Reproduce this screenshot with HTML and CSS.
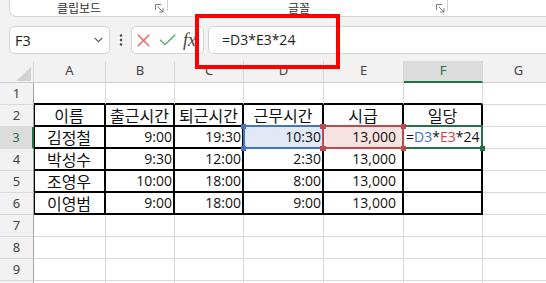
FILE: index.html
```html
<!DOCTYPE html>
<html lang="ko">
<head>
<meta charset="utf-8">
<title>Excel</title>
<link rel="stylesheet" href="styles.css">
</head>
<body>
<div class="app">
  <div class="ribbon">
    <div class="group clip">
      <span class="glabel">클립보드</span>
      <svg class="launcher" width="9" height="9" viewBox="0 0 9 9"><path d="M0.5 6V0.5H6" fill="none" stroke="#7a7a7a" stroke-width="1"/><path d="M2.5 2.5L8 8M8 4.2V8H4.2" fill="none" stroke="#7a7a7a" stroke-width="1"/></svg>
    </div>
    <div class="sep"></div>
    <div class="group fontg">
      <span class="glabel">글꼴</span>
      <svg class="launcher" width="9" height="9" viewBox="0 0 9 9"><path d="M0.5 6V0.5H6" fill="none" stroke="#7a7a7a" stroke-width="1"/><path d="M2.5 2.5L8 8M8 4.2V8H4.2" fill="none" stroke="#7a7a7a" stroke-width="1"/></svg>
    </div>
    <div class="sep"></div>
  </div>

  <div class="fbar">
    <div class="namebox">
      <span class="nbtext">F3</span>
      <svg class="chev" width="9" height="6" viewBox="0 0 9 6"><path d="M0.6 0.8L4.5 4.7L8.4 0.8" fill="none" stroke="#555" stroke-width="1.1"/></svg>
    </div>
    <div class="dots">
      <svg width="4" height="12" viewBox="0 0 4 12"><circle cx="2" cy="1.5" r="1.2" fill="#444"/><circle cx="2" cy="6" r="1.2" fill="#444"/><circle cx="2" cy="10.5" r="1.2" fill="#444"/></svg>
    </div>
    <div class="fbtns">
      <svg class="xicon" width="13" height="13" viewBox="0 0 13 13"><path d="M0.8 0.8L12.2 12.2M12.2 0.8L0.8 12.2" stroke="#e35b5b" stroke-width="1.3" fill="none"/></svg>
      <svg class="okicon" width="17" height="12" viewBox="0 0 17 12"><path d="M0.8 5.6L6 10.7L16.2 0.8" fill="none" stroke="#4aa656" stroke-width="1.3"/></svg>
      <span class="fx">fx</span>
    </div>
    <div class="finput">=D3*E3*24</div>
  </div>

  <div class="sheet">
    <div class="ch corner"><svg width="15" height="14" viewBox="0 0 15 14"><path d="M15 0V14H0Z" fill="#d3d3d3"/></svg></div>
    <div class="ch">A</div>
    <div class="ch">B</div>
    <div class="ch">C</div>
    <div class="ch">D</div>
    <div class="ch">E</div>
    <div class="ch sel">F</div>
    <div class="ch">G</div>

    <div class="rh">1</div>
    <div class="c tt"></div>
    <div class="c tt"></div>
    <div class="c tt"></div>
    <div class="c tt"></div>
    <div class="c tt"></div>
    <div class="c tt"></div>
    <div class="c"></div>

    <div class="rh">2</div>
    <div class="c t ta ctr">이름</div>
    <div class="c t ctr">출근시간</div>
    <div class="c t ctr">퇴근시간</div>
    <div class="c t ctr">근무시간</div>
    <div class="c t ctr">시급</div>
    <div class="c t ctr">일당</div>
    <div class="c"></div>

    <div class="rh sel">3</div>
    <div class="c t ta ctr">김정철</div>
    <div class="c t num">9:00</div>
    <div class="c t num">19:30</div>
    <div class="c t num hl d3">10:30<span class="ref blue"><i class="h tl"></i><i class="h bl"></i><i class="h tr"></i><i class="h br"></i></span></div>
    <div class="c t num pe hl e3">13,000<span class="ref red"><i class="h tl"></i><i class="h bl"></i><i class="h tr"></i><i class="h br"></i></span></div>
    <div class="c t hl fcell">=<span class="cb">D3</span>*<span class="cr">E3</span>*24<span class="ref green"><i class="h fill"></i></span></div>
    <div class="c"></div>

    <div class="rh">4</div>
    <div class="c t ta ctr">박성수</div>
    <div class="c t num">9:30</div>
    <div class="c t num">12:00</div>
    <div class="c t num">2:30</div>
    <div class="c t num pe">13,000</div>
    <div class="c t"></div>
    <div class="c"></div>

    <div class="rh">5</div>
    <div class="c t ta ctr">조영우</div>
    <div class="c t num">10:00</div>
    <div class="c t num">18:00</div>
    <div class="c t num">8:00</div>
    <div class="c t num pe">13,000</div>
    <div class="c t"></div>
    <div class="c"></div>

    <div class="rh">6</div>
    <div class="c t ta ctr">이영범</div>
    <div class="c t num">9:00</div>
    <div class="c t num">18:00</div>
    <div class="c t num">9:00</div>
    <div class="c t num pe">13,000</div>
    <div class="c t"></div>
    <div class="c"></div>

    <div class="rh">7</div>
    <div class="c"></div><div class="c"></div><div class="c"></div><div class="c"></div><div class="c"></div><div class="c"></div><div class="c"></div>

    <div class="rh">8</div>
    <div class="c"></div><div class="c"></div><div class="c"></div><div class="c"></div><div class="c"></div><div class="c"></div><div class="c"></div>

    <div class="rh">9</div>
    <div class="c"></div><div class="c"></div><div class="c"></div><div class="c"></div><div class="c"></div><div class="c"></div><div class="c"></div>

    <div class="rh"></div>
    <div class="c"></div><div class="c"></div><div class="c"></div><div class="c"></div><div class="c"></div><div class="c"></div><div class="c"></div>
  </div>

  <div class="callout"></div>
</div>
</body>
</html>
```

FILE: styles.css
```css
* {
  box-sizing: border-box;
  margin: 0;
  padding: 0;
}

html,
body {
  width: 546px;
  height: 283px;
  overflow: hidden;
  background: #f2f2f2;
}

body {
  font-family: "Noto Sans CJK KR", "Noto Sans", sans-serif;
  color: #111;
}

.app {
  position: relative;
  width: 546px;
  height: 283px;
  overflow: hidden;
}

/* ribbon */
.ribbon {
  display: flex;
  height: 17px;
  width: 600px;
  margin-left: 9px;
  background: #fff;
  border-left: 1px solid #d6d6d6;
  border-bottom: 1px solid #d6d6d6;
  border-bottom-left-radius: 8px;
}

.group {
  display: flex;
  align-items: center;
  height: 16px;
}

.group.clip {
  width: 157px;
  padding-left: 47px;
}

.group.fontg {
  width: 279px;
  padding-left: 120px;
}

.glabel {
  font-size: 12px;
  line-height: 16px;
  color: #333;
}

.launcher {
  margin-left: auto;
  margin-right: 3px;
  display: block;
}

.group.fontg .launcher {
  margin-right: 2px;
}

.sep {
  width: 1px;
  height: 11px;
  background: #cfcfcf;
}

/* formula bar */
.fbar {
  display: flex;
  align-items: flex-start;
  height: 44px;
  width: 600px;
  padding-top: 9px;
}

.namebox {
  display: flex;
  align-items: center;
  width: 101px;
  height: 28px;
  margin-left: 9px;
  padding-left: 5px;
  background: #fff;
  border: 1px solid #d4d4d4;
  border-radius: 5px;
}

.nbtext {
  font-family: "Open Sans", sans-serif;
  font-size: 14.5px;
  color: #222;
}

.chev {
  display: block;
  margin-left: auto;
  margin-right: 6px;
}

.dots {
  display: flex;
  align-items: center;
  justify-content: center;
  width: 21px;
  height: 28px;
}

.dots svg {
  display: block;
}

.fbtns {
  display: flex;
  align-items: center;
  width: 73px;
  height: 28px;
  padding-left: 5px;
  background: #fff;
  border: 1px solid #d4d4d4;
  border-radius: 5px;
}

.xicon {
  display: block;
  margin-right: 9px;
}

.okicon {
  display: block;
  margin-right: 7px;
}

.fx {
  font-family: "Liberation Serif", serif;
  font-style: italic;
  font-size: 18px;
  line-height: 20px;
  color: #444;
}

.finput {
  flex: 1;
  height: 28px;
  margin-left: 4px;
  padding-left: 13px;
  background: #fff;
  border: 1px solid #d4d4d4;
  border-right: none;
  border-radius: 5px 0 0 5px;
  font-family: "Open Sans", sans-serif;
  font-size: 14px;
  line-height: 26px;
  color: #222;
}

/* sheet */
.sheet {
  display: grid;
  grid-template-columns: 34px 72px 69px 69px 80px 80px 79px 72px;
  grid-auto-rows: 22px;
  width: 555px;
  background: #fff;
}

.ch {
  background: #f2f2f2;
  border-right: 1px solid #d8d8d8;
  border-bottom: 1px solid #cdcdcd;
  font-family: "Noto Sans", sans-serif;
  font-size: 13px;
  line-height: 19px;
  text-align: center;
  color: #444;
}

.ch.corner {
  display: flex;
  justify-content: flex-end;
  align-items: flex-end;
  padding: 0 2px 1px 0;
}

.ch.corner svg {
  display: block;
}

.ch.sel {
  background: #dcdcdc;
  color: #217346;
  border-bottom: 2px solid #217346;
}

.rh {
  background: #f2f2f2;
  border-right: 1px solid #a3a3a3;
  border-bottom: 1px solid #dadada;
  font-family: "Noto Sans", sans-serif;
  font-size: 13px;
  line-height: 21px;
  text-align: center;
  color: #444;
}

.rh.sel {
  background: #dcdcdc;
  color: #217346;
  border-right: 2px solid #217346;
}

.c {
  border-right: 1px solid #dadada;
  border-bottom: 1px solid #dadada;
  font-size: 16px;
  line-height: 20px;
  padding: 0 1px;
  white-space: nowrap;
  color: #111;
}

.tt {
  border-bottom: 2px solid #000;
}

.t {
  border-right: 2px solid #000;
  border-bottom: 2px solid #000;
}

.ta {
  box-shadow: inset 1px 0 0 #000;
}

.ctr {
  text-align: center;
}

.num {
  text-align: right;
  font-family: "Open Sans", sans-serif;
  font-size: 14px;
}

.num.pe {
  padding-right: 6px;
}

.hl {
  position: relative;
}

.d3 {
  background: #e1e9f7;
}

.e3 {
  background: #f8e3e3;
}

.fcell {
  padding-left: 2px;
  text-align: left;
  font-family: "Open Sans", sans-serif;
  font-size: 14px;
}

.cb {
  color: #3f6fcf;
}

.cr {
  color: #cf3f46;
}

.ref {
  position: absolute;
  top: -2px;
  bottom: -2px;
  right: -2px;
  left: -2px;
  border: 2px solid;
}

.ref.blue {
  left: -1px;
  border-color: #4472c4;
  z-index: 1;
}

.ref.green {
  border-color: #217346;
  z-index: 2;
}

.ref.red {
  border-color: #c4474b;
  z-index: 3;
}

.h {
  position: absolute;
  width: 5px;
  height: 5px;
}

.ref.blue .h {
  background: #4472c4;
}

.ref.red .h {
  background: #c4474b;
}

.ref.green .h {
  background: #217346;
}

.h.tl {
  left: -4px;
  top: -3px;
}

.h.bl {
  left: -4px;
  bottom: -4px;
}

.h.tr {
  right: -4px;
  top: -3px;
}

.h.br {
  right: -4px;
  bottom: -4px;
}

.h.fill {
  right: -4px;
  bottom: -4px;
}

/* red annotation box */
.callout {
  position: absolute;
  left: 195px;
  top: 14px;
  width: 145px;
  height: 55px;
  border: 4px solid #f00;
  z-index: 10;
}
```
